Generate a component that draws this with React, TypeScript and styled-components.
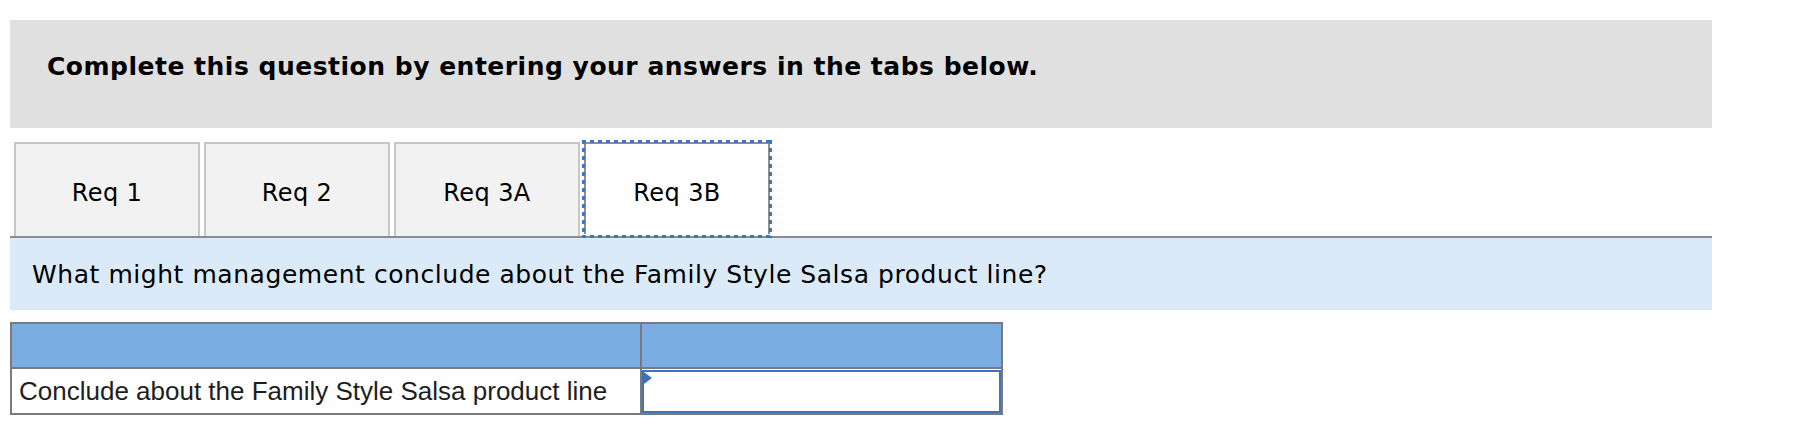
import React from "react";
import styled, { createGlobalStyle, css } from "styled-components";

const VERDANA = `"DejaVu Sans", Verdana, sans-serif`;
const ARIAL = `"Liberation Sans", Arial, sans-serif`;
const FOCUS = "#3b76c5";

const GlobalStyle = createGlobalStyle`
  body {
    margin: 0;
    background: #ffffff;
    font-family: ${VERDANA};
    color: #000;
  }
`;

const tabs = ["Req 1", "Req 2", "Req 3A", "Req 3B"];

export default function App() {
  const active = 3;
  return (
    <Page>
      <GlobalStyle />
      <Instructions>
        <h2>Complete this question by entering your answers in the tabs below.</h2>
      </Instructions>
      <TabRow>
        {tabs.map((t, i) => (
          <Tab key={t} active={i === active}>
            {t}
          </Tab>
        ))}
      </TabRow>
      <Question>What might management conclude about the Family Style Salsa product line?</Question>
      <AnswerGrid>
        <HeadCell />
        <HeadCell />
        <LabelCell>Conclude about the Family Style Salsa product line</LabelCell>
        <InputCell>
          <Dropdown>
            <Marker />
          </Dropdown>
        </InputCell>
      </AnswerGrid>
    </Page>
  );
}

const Page = styled.div`
  width: 1702px;
  padding: 20px 0 0 10px;
`;

const Instructions = styled.div`
  height: 108px;
  box-sizing: border-box;
  background-color: #e0e0e0;
  padding: 32px 0 0 37px;
  h2 {
    margin: 0;
    font-size: 25px;
    font-weight: 700;
    letter-spacing: 0.5px;
    line-height: 29px;
  }
`;

const TabRow = styled.div`
  display: flex;
  align-items: flex-start;
  gap: 4px;
  margin-top: 14px;
  padding-left: 4px;
  height: 94px;
`;

// dotted focus ring drawn as 4px dots on an 8px step
const dots = (dir: string) =>
  `repeating-linear-gradient(${dir}, ${FOCUS} 0 4px, transparent 4px 8px)`;

const Tab = styled.div<{ active?: boolean }>`
  width: 186px;
  height: ${({ active }) => (active ? "92px" : "94px")};
  box-sizing: border-box;
  display: flex;
  align-items: center;
  justify-content: center;
  border: 2px solid ${({ active }) => (active ? "#8f8f8f" : "#c6c6c6")};
  border-bottom: none;
  background-color: ${({ active }) => (active ? "#ffffff" : "#f2f2f2")};
  font-size: 24px;
  letter-spacing: 0.4px;
  padding-top: ${({ active }) => (active ? "7px" : "5px")};
  cursor: pointer;
  ${({ active }) =>
    active &&
    css`
      position: relative;
      z-index: 1;
      &::after {
        content: "";
        position: absolute;
        inset: -4px;
        pointer-events: none;
        background:
          ${dots("90deg")} left top / 100% 3px no-repeat,
          ${dots("90deg")} left bottom / 100% 3px no-repeat,
          ${dots("180deg")} left top / 3px 100% no-repeat,
          ${dots("180deg")} right top / 3px 100% no-repeat;
      }
    `}
`;

const Question = styled.div`
  height: 74px;
  box-sizing: border-box;
  border-top: 2px solid #8c8c8c;
  background-color: #dbeaf8;
  display: flex;
  align-items: center;
  padding-left: 22px;
  font-size: 25px;
  letter-spacing: 0.55px;
`;

const AnswerGrid = styled.div`
  margin-top: 12px;
  width: 993px;
  box-sizing: border-box;
  display: grid;
  grid-template-columns: 628px 359px;
  grid-template-rows: 43px 44px;
  gap: 2px;
  padding: 2px;
  background-color: #7a7a7a;
`;

const HeadCell = styled.div`
  background-color: #7badE2;
`;

const LabelCell = styled.div`
  background-color: #ffffff;
  display: flex;
  align-items: center;
  padding-left: 7px;
  font-family: ${ARIAL};
  font-size: 26px;
  color: #1e1e1e;
`;

const InputCell = styled.div`
  background-color: #ffffff;
  display: flex;
`;

const Dropdown = styled.div`
  position: relative;
  flex: 1;
  margin-top: 1px;
  border: 2px solid #3d74b8;
  background-color: #ffffff;
`;

const Marker = styled.span`
  position: absolute;
  left: 0;
  top: 0;
  width: 0;
  height: 0;
  border-top: 6px solid transparent;
  border-bottom: 6px solid transparent;
  border-left: 8px solid #3d74b8;
`;
